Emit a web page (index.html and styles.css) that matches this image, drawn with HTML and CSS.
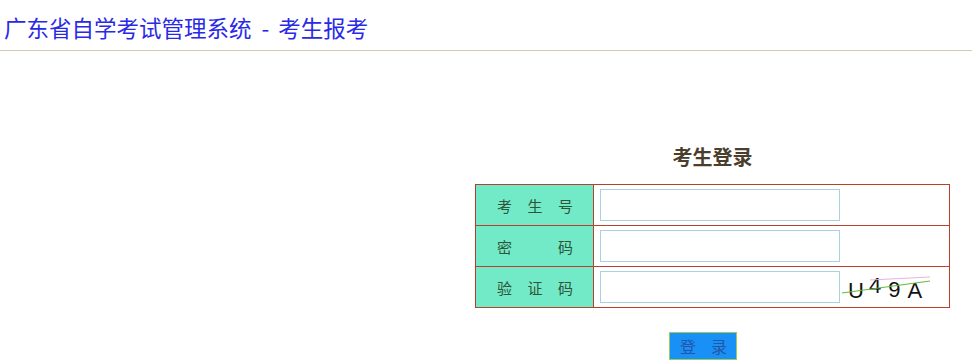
FILE: index.html
```html
<!DOCTYPE html>
<html lang="zh-CN">
<head>
<meta charset="utf-8">
<title>考生登录</title>
<link rel="stylesheet" href="styles.css">
</head>
<body>
<div class="header">广东省自学考试管理系统<span class="dash">-</span>考生报考</div>
<div class="login">
  <div class="login-title">考生登录</div>
  <table class="login-table">
    <tr>
      <td class="label"><span class="label-text">考生号</span></td>
      <td class="field"><input class="text-input" type="text"></td>
    </tr>
    <tr>
      <td class="label"><span class="label-text">密码</span></td>
      <td class="field"><input class="text-input" type="password"></td>
    </tr>
    <tr>
      <td class="label"><span class="label-text">验证码</span></td>
      <td class="field">
        <span class="captcha-wrap">
          <input class="text-input" type="text">
          <span class="captcha">
            <span class="c c1">U</span><span class="c c2">4</span><span class="c c3">9</span><span class="c c4">A</span>
            <svg class="noise" width="92" height="28" viewBox="0 0 92 28">
              <line x1="0" y1="20" x2="88" y2="8" stroke="#5fb83c" stroke-width="1"/>
              <line x1="28" y1="7" x2="88" y2="4" stroke="#eab2dc" stroke-width="1"/>
            </svg>
          </span>
        </span>
      </td>
    </tr>
  </table>
  <div class="actions"><button class="login-btn" type="button"><span>登</span><span>录</span></button></div>
</div>
</body>
</html>
```
FILE: styles.css
```css
html, body {
  margin: 0;
  padding: 0;
  background: #ffffff;
  font-family: "Noto Sans CJK SC", "Noto Sans", sans-serif;
}

.header {
  padding: 13px 0 9px 4px;
  font-size: 22.5px;
  line-height: 28px;
  color: #2a2ae6;
  border-bottom: 1px solid #d2ccae;
  white-space: nowrap;
}

.dash {
  display: inline-block;
  padding: 0 9px 0 10px;
}

.login {
  margin: 94px 0 0 475px;
  width: 475px;
}

.login-title {
  text-align: center;
  font-size: 20px;
  font-weight: bold;
  line-height: 24px;
  color: #4a3e2c;
  margin-bottom: 15px;
}

.login-table {
  border-collapse: collapse;
  width: 475px;
  border: 1px solid #c4402c;
}

.login-table td {
  border: 1px solid #b8402a;
  height: 40px;
  padding: 0;
  vertical-align: middle;
}

.label {
  width: 117px;
  background: #72eac8;
  text-align: center;
}

.label-text {
  display: inline-block;
  width: 76px;
  font-size: 15px;
  line-height: 20px;
  color: #2f5638;
  text-align: justify;
  text-align-last: justify;
  margin-left: 1px;
}

.field {
  padding-left: 6px !important;
  white-space: nowrap;
}

.captcha-wrap {
  display: inline-flex;
  align-items: center;
}

.text-input {
  box-sizing: border-box;
  width: 240px;
  height: 32px;
  margin: 0;
  border: 1px solid #a9d2e0;
  padding: 0 4px;
  vertical-align: middle;
  outline: none;
}

.captcha {
  position: relative;
  display: inline-block;
  margin-left: 2px;
  padding-left: 6px;
  width: 86px;
  height: 28px;
  font-family: "Liberation Sans", Arial, sans-serif;
  font-size: 22px;
  line-height: 28px;
  color: #111111;
}

.c {
  display: inline-block;
  position: relative;
}

.c1 { top: 4px; }
.c2 { margin-left: 5px; top: -1px; }
.c3 { margin-left: 7px; top: 3px; }
.c4 { margin-left: 7px; top: 4px; }

.noise {
  position: absolute;
  left: 0;
  top: 0;
}

.actions {
  padding: 24px 0 0 194px;
}

.login-btn {
  display: flex;
  justify-content: space-between;
  align-items: center;
  box-sizing: border-box;
  width: 68px;
  height: 28px;
  background: #1890f6;
  border: 1px solid #9ccc58;
  color: #2456a8;
  font-family: "Noto Sans CJK SC", sans-serif;
  font-size: 16px;
  line-height: 20px;
  padding: 0 9px 0 10px;
  white-space: nowrap;
}
```
